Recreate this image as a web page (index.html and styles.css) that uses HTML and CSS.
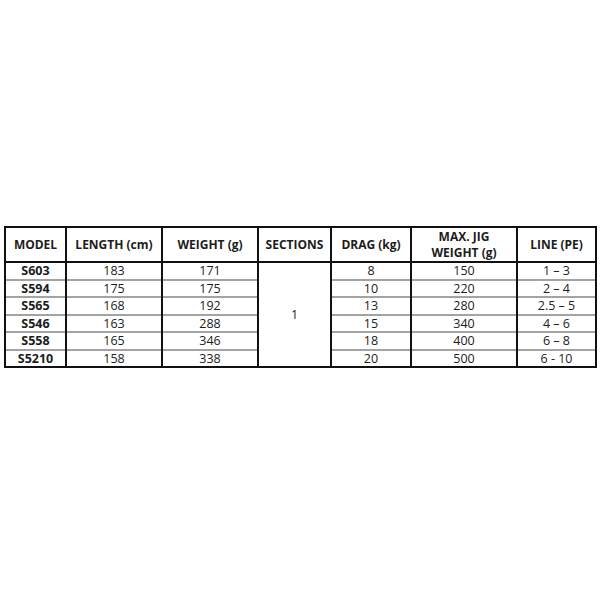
FILE: index.html
```html
<!DOCTYPE html>
<html>
<head>
<meta charset="utf-8">
<link rel="stylesheet" href="styles.css">
</head>
<body>
<div class="page">
<table class="spec">
  <colgroup>
    <col class="c-model"><col class="c-len"><col class="c-wt"><col class="c-sec"><col class="c-drag"><col class="c-jig"><col class="c-line">
  </colgroup>
  <thead>
    <tr>
      <th>MODEL</th><th>LENGTH (cm)</th><th>WEIGHT (g)</th><th>SECTIONS</th><th>DRAG (kg)</th><th>MAX. JIG<br>WEIGHT (g)</th><th>LINE (PE)</th>
    </tr>
  </thead>
  <tbody>
    <tr><td class="model">S603</td><td>183</td><td>171</td><td class="sections" rowspan="6">1</td><td>8</td><td>150</td><td>1 – 3</td></tr>
    <tr><td class="model">S594</td><td>175</td><td>175</td><td>10</td><td>220</td><td>2 – 4</td></tr>
    <tr><td class="model">S565</td><td>168</td><td>192</td><td>13</td><td>280</td><td>2.5 – 5</td></tr>
    <tr><td class="model">S546</td><td>163</td><td>288</td><td>15</td><td>340</td><td>4 – 6</td></tr>
    <tr><td class="model">S558</td><td>165</td><td>346</td><td>18</td><td>400</td><td>6 – 8</td></tr>
    <tr><td class="model">S5210</td><td>158</td><td>338</td><td>20</td><td>500</td><td>6 - 10</td></tr>
  </tbody>
</table>
</div>
</body>
</html>
```
FILE: styles.css
```css
html, body {
  margin: 0;
  padding: 0;
  background: #ffffff;
}
.page {
  width: 600px;
  height: 600px;
  padding: 226px 0 0 4px;
  box-sizing: border-box;
}
.spec {
  border-collapse: collapse;
  table-layout: fixed;
  width: 591px;
  font-family: "Open Sans", "DejaVu Sans", sans-serif;
  color: #1c1c1c;
  border: 2px solid #111;
}
.c-model { width: 61px; }
.c-len { width: 96px; }
.c-wt { width: 96px; }
.c-sec { width: 73px; }
.c-drag { width: 80px; }
.c-jig { width: 106px; }
.c-line { width: 79px; }
.spec th {
  font-size: 12px;
  font-weight: 700;
  line-height: 16px;
  height: 33px;
  padding: 0;
  text-align: center;
  vertical-align: middle;
  border-left: 2px solid #111;
  border-right: 2px solid #111;
  border-bottom: 2px solid #111;
}
.spec td {
  font-size: 12.5px;
  line-height: 15px;
  height: 15.5px;
  padding: 0;
  text-align: center;
  vertical-align: middle;
  border-left: 2px solid #111;
  border-right: 2px solid #111;
  border-top: 2px solid #a3a3a3;
}
.spec tbody tr:first-child td {
  border-top: 2px solid #111;
}
.spec td.model {
  font-weight: 700;
  font-size: 12.5px;
}
.spec td.sections {
  border-top: 2px solid #111;
}
```
